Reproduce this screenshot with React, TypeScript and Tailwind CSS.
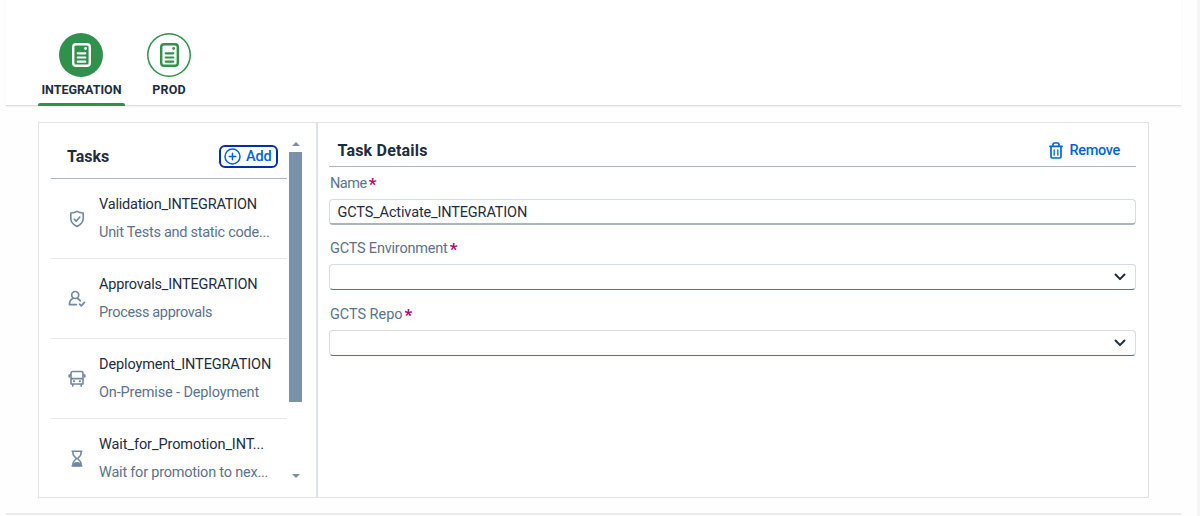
import React from "react";

const line = {
  fill: "none",
  stroke: "currentColor",
  strokeLinecap: "round" as const,
  strokeLinejoin: "round" as const,
};

function DocIcon() {
  return (
    <svg width="19" height="24" viewBox="0 0 19 24" {...line} strokeWidth="2.4">
      <rect x="1.2" y="1.2" width="16.6" height="21.6" rx="2.8" />
      <path d="M5.700 10.300h7.600M5.700 14.500h7.600M5.700 18.700h7.600" strokeWidth="2.200" />
      <circle cx="13.600" cy="5.500" r="1.400" fill="currentColor" stroke="none" />
    </svg>
  );
}

function ShieldIcon() {
  return (
    <svg width="18" height="18" viewBox="0 0 18 18" {...line} strokeWidth="1.6">
      <path d="M9 1.400C7.200 2.600 5.200 3 2.800 3v5.600c0 3.800 2.400 6.200 6.200 7.900 3.800-1.700 6.200-4.100 6.200-7.900V3C12.800 3 10.800 2.600 9 1.400Z" />
      <path d="m6.200 9 2 2.100 3.700-4.100" />
    </svg>
  );
}

function ApprovalIcon() {
  return (
    <svg width="18" height="18" viewBox="0 0 18 18" {...line} strokeWidth="1.7">
      <circle cx="7.200" cy="5" r="3.500" />
      <path d="M4.900 8.400C2.500 9.500 1.500 11.400 1.400 14.600H8.400M9.600 8.600c1.200.5 2 1.200 2.600 2.200M11.600 14.200l1.700 1.700 3.200-3.500" />
    </svg>
  );
}

function BusIcon() {
  return (
    <svg width="18" height="18" viewBox="0 0 18 18" {...line} strokeWidth="1.6">
      <path d="M3 14V3.200C3 2 3.600 1.500 4.700 1.500h8.600c1.100 0 1.700.5 1.700 1.700V14ZM3 8.600h12M1.200 5v2M3 5H1.200M15 5h1.800v2M4.800 14.200v1.900M13.200 14.200v1.900" />
      <path d="M5.900 11.300h.4M11.700 11.300h.4" strokeWidth="1.900" />
    </svg>
  );
}

function HourglassIcon() {
  return (
    <svg width="18" height="18" viewBox="0 0 18 18" {...line} strokeWidth="1.600">
      <path d="M4.200 1.300h9.600M4.200 15.900h9.600M5 1.600v2.200C5 6.100 7.400 6.900 8.300 8.600 7.400 10.300 5 11.100 5 13.400v2.200M13 1.600v2.200c0 2.300-2.400 3.100-3.300 4.800.9 1.700 3.300 2.500 3.300 4.800v2.200" />
      <path d="M5.300 15.400c0-2 1.700-2.700 3.700-2.700s3.700.7 3.700 2.700Z" fill="currentColor" />
    </svg>
  );
}

function AddIcon() {
  return (
    <svg width="17" height="17" viewBox="0 0 17 17" {...line} strokeWidth="1.5">
      <circle cx="8.500" cy="8.500" r="7.500" />
      <path d="M8.500 5.200v6.600M5.200 8.500h6.600" />
    </svg>
  );
}

function TrashIcon() {
  return (
    <svg width="14" height="17" viewBox="0 0 14 17" {...line} strokeWidth="1.700">
      <path d="M.9 4.300h12.200M2 4.500v10.200c0 .8.500 1.300 1.300 1.300h7.400c.8 0 1.300-.5 1.300-1.300V4.500M4 4V2.500C4 1.500 4.600 1 5.500 1h3c.9 0 1.500.5 1.500 1.500V4" />
      <path d="M5.200 7.800v5.400M8.800 7.800v5.400" strokeWidth="1.300" />
    </svg>
  );
}

function Chevron() {
  return (
    <svg width="12" height="8" viewBox="0 0 12 8" {...line} strokeWidth="2">
      <path d="m1.500 1.500 4.500 4.600 4.500-4.600" />
    </svg>
  );
}

const tasks = [
  { icon: <ShieldIcon />, name: "Validation_INTEGRATION", text: "Unit Tests and static code...", nameCls: "tracking-[-0.2px]", textCls: "tracking-[-0.27px]" },
  { icon: <ApprovalIcon />, name: "Approvals_INTEGRATION", text: "Process approvals", nameCls: "tracking-[-0.18px]", textCls: "tracking-[-0.34px]" },
  { icon: <BusIcon />, name: "Deployment_INTEGRATION", text: "On-Premise - Deployment", nameCls: "tracking-[-0.12px]", textCls: "tracking-[-0.14px]" },
  { icon: <HourglassIcon />, name: "Wait_for_Promotion_INT...", text: "Wait for promotion to nex...", nameCls: "tracking-[-0.08px]", textCls: "tracking-[-0.22px]" },
];

function Label({ text, className }: { text: string; className: string }) {
  return (
    <div className="flex h-[20px] items-center gap-[2px] pl-[1px] text-[14.5px] text-[#5b738b]">
      <span className={className}>{text}</span>
      <span className="h-[20px] text-[17px] leading-[20px] font-bold text-[#ba066c]">*</span>
    </div>
  );
}

function Select() {
  return (
    <button className="flex h-[26px] w-full items-center justify-end rounded-[4px] border border-[#d5dce3] border-b-[#5b738b] bg-white pr-[9px] text-[#1d2d3e]">
      <Chevron />
    </button>
  );
}

export default function App() {
  return (
    <div className="flex h-[516px] w-[1200px] overflow-hidden bg-[#fefefe] font-['Roboto',sans-serif] text-[#1d2d3e]">
      <div className="ml-[6px] flex w-[1175px] flex-col">
        <nav className="flex h-[106px] shrink-0 gap-[22px] border-b border-[#dcdedf] bg-white pl-[32px] shadow-[0_1px_2px_rgba(0,0,0,0.06)]">
          <div className="flex h-[106px] w-[87px] flex-col items-center pt-[33px]">
            <div className="mr-px flex size-[44px] items-center justify-center rounded-full bg-[#30914c] text-white">
              <DocIcon />
            </div>
            <span className="mt-[4px] text-[12.5px] leading-[17px] font-bold whitespace-nowrap">INTEGRATION</span>
            <div className="mt-auto h-[3px] w-full rounded-t-[2px] bg-[#30914c]" />
          </div>
          <div className="flex w-[44px] flex-col items-center pt-[33px]">
            <div className="flex size-[44px] shrink-0 items-center justify-center rounded-full bg-white text-[#30914c] inset-ring-[1.5px] inset-ring-[#30914c]">
              <DocIcon />
            </div>
            <span className="mt-[4px] text-[12.5px] leading-[17px] font-bold tracking-[0.2px]">PROD</span>
          </div>
        </nav>

        <main className="mt-[16px] ml-[32px] flex h-[376px] w-[1111px] shrink-0 border border-[#e0e4e8] bg-white">
          <aside className="flex w-[279px] shrink-0 border-r-2 border-[#dce3e9] pl-[12px]">
            <div className="flex w-[236px] flex-col">
              <header className="flex h-[56px] shrink-0 items-start justify-between border-b border-[#a8b5c1] pt-[22px] pr-[9px] pl-[16px]">
                <h2 className="mt-[2px] text-[16px] leading-[20px] font-bold">Tasks</h2>
                <button className="flex h-[23px] w-[59px] items-center gap-[5px] rounded-[6px] border-2 border-[#0032a5] pl-[3px] text-[14.5px] leading-[18px] font-medium text-[#0064d9]">
                  <AddIcon />
                  <span className="tracking-[-0.15px]">Add</span>
                </button>
              </header>
              <ul>
                {tasks.map((t) => (
                  <li key={t.name} className="flex h-[80px] items-center border-b border-[#e5e8eb] pl-[17px] last:border-transparent">
                    <span className="w-[31px] shrink-0 text-[#7089a3]">{t.icon}</span>
                    <div className="flex flex-col gap-[8px] text-[14.5px] leading-[20px] whitespace-nowrap">
                      <span className={t.nameCls}>{t.name}</span>
                      <span className={`text-[#5b738b] ${t.textCls}`}>{t.text}</span>
                    </div>
                  </li>
                ))}
              </ul>
            </div>
            <div className="ml-[2px] flex w-[13px] flex-col items-center pt-[19px] text-[#7b91a8]">
              <svg width="8" height="4" viewBox="0 0 8 4" fill="currentColor"><path d="M0 4 4 0l4 4Z" /></svg>
              <div className="mt-[6px] h-[250px] w-full bg-[#7b91a8]" />
              <svg className="mt-[72px]" width="8" height="4" viewBox="0 0 8 4" fill="currentColor"><path d="m0 0 4 4 4-4Z" /></svg>
            </div>
          </aside>

          <section className="flex flex-1 flex-col pr-[12px] pl-[11px]">
            <header className="flex h-[44px] shrink-0 items-center justify-between border-b border-[#a8b5c1] pt-[12px] pr-[16px] pl-[8.500px]">
              <h2 className="text-[16px] leading-[20px] font-bold tracking-[0.2px]">Task Details</h2>
              <button className="flex items-center gap-[7px] text-[14.5px] leading-[20px] font-medium text-[#0064d9]">
                <TrashIcon />
                <span className="tracking-[-0.35px]">Remove</span>
              </button>
            </header>
            <div className="mt-[6.500px] flex flex-col">
              <Label text="Name" className="tracking-[-0.5px]" />
              <input
                readOnly
                value="GCTS_Activate_INTEGRATION"
                className="mt-[5.500px] h-[26px] w-full rounded-[4px] border border-[#d5dce3] border-b-2 border-b-[#a8b5c1] bg-white px-[7.500px] pt-[1px] text-[14.5px] tracking-[-0.14px] outline-none"
              />
              <div className="mt-[14px]"><Label text="GCTS Environment" className="tracking-[-0.2px]" /></div>
              <div className="mt-[5px]"><Select /></div>
              <div className="mt-[14.500px]"><Label text="GCTS Repo" className="tracking-[-0.05px]" /></div>
              <div className="mt-[5.500px]"><Select /></div>
            </div>
          </section>
        </main>
        <div className="mt-[15px] h-[2px] shrink-0 bg-[#ececec]" />
      </div>
      <div className="ml-auto w-[3px] bg-[#f5f5f5]" />
    </div>
  );
}
